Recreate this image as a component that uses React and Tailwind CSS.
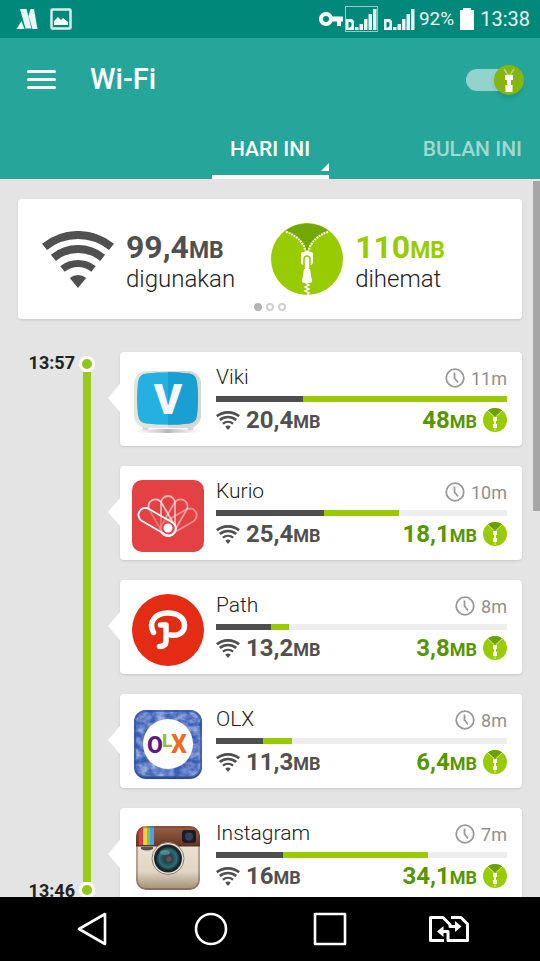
import { useState } from "react";

const APPS = [
  { name: "Viki", ago: "11m", used: "20,4", saved: "48", usedPct: 30, savedPct: 70, Icon: VikiIcon },
  { name: "Kurio", ago: "10m", used: "25,4", saved: "18,1", usedPct: 37, savedPct: 26, Icon: KurioIcon },
  { name: "Path", ago: "8m", used: "13,2", saved: "3,8", usedPct: 19, savedPct: 6, Icon: PathIcon },
  { name: "OLX", ago: "8m", used: "11,3", saved: "6,4", usedPct: 16, savedPct: 10, Icon: OlxIcon },
  { name: "Instagram", ago: "7m", used: "16", saved: "34,1", usedPct: 23, savedPct: 50, Icon: InstagramIcon },
];

function WifiIcon({ className }) {
  return (
    <svg viewBox="0 0 72 57" className={className} fill="none" stroke="#505050" aria-hidden="true">
      <path d="M2.5 15.9A53 53 0 0 1 69.5 15.9" strokeWidth="8" />
      <path d="M11.4 26.8A39 39 0 0 1 60.6 26.8" strokeWidth="8" />
      <path d="M20.5 38A24.5 24.5 0 0 1 51.5 38" strokeWidth="7" />
      <path d="M36 57L27.8 46.9A13 13 0 0 1 44.2 46.9Z" fill="#505050" stroke="none" />
    </svg>
  );
}

function ZipIcon({ className }) {
  return (
    <svg viewBox="0 0 72 72" className={className} aria-hidden="true">
      <circle cx="36" cy="36" r="36" fill="#99cc00" />
      <path d="M15 7.2A36 36 0 0 1 57 7.2C48 12 40 18 36 28C32 18 24 12 15 7.2Z" fill="#74a800" />
      <path d="M15 9C25 12 33 19 35 30M57 9C47 12 39 19 37 30" fill="none" stroke="#fff" strokeWidth="2.2" strokeDasharray="1.8 1" />
      <path d="M35 60L38 62L34 64L38 66L34 68L38 70L36 72" fill="none" stroke="#fff" strokeWidth="1.4" />
      <path d="M32 29h8a2 2 0 0 1 2 2v8a3 3 0 0 1-2 3h-8a3 3 0 0 1-2-3v-8a2 2 0 0 1 2-2Z" fill="#fff" />
      <rect x="33" y="33" width="6" height="15" rx="3" fill="#fff" stroke="#99cc00" strokeWidth="1.6" />
      <path d="M33 46h6l2 12a2 2 0 0 1-2 2h-6a2 2 0 0 1-2-2Z" fill="#fff" />
    </svg>
  );
}

// Simplified zipper for the badges at the end of each row
function SmallZipIcon({ className }) {
  return (
    <svg viewBox="0 0 24 24" className={className} aria-hidden="true">
      <circle cx="12" cy="12" r="12" fill="#99cc00" />
      <path d="M5 2.3A12 12 0 0 1 19 2.3L12 9Z" fill="#6da000" />
      <path d="M5 3L11.5 9M19 3L12.5 9" stroke="#cfe88a" strokeWidth="1" />
      <path d="M10 9h4v4h-1v3h1v4h-4v-4h1v-3h-1Z" fill="#fff" />
      <path d="M12 20v3" stroke="#dff0a8" strokeWidth="1" />
    </svg>
  );
}

function ClockIcon() {
  return (
    <svg viewBox="0 0 20 20" className="size-5" fill="none" stroke="#9a9a9a" strokeWidth="1.8" aria-hidden="true">
      <circle cx="10" cy="10" r="8.8" />
      <path d="M9.5 4.5V10L13 14.5" />
    </svg>
  );
}

function VikiIcon() {
  return (
    <svg viewBox="0 0 72 72" className="size-[72px]" aria-hidden="true">
      <defs>
        <linearGradient id="viki-shadow" x1="0" x2="1">
          <stop offset="0" stopColor="#bbb" stopOpacity="0" />
          <stop offset="0.5" stopColor="#999" stopOpacity="0.7" />
          <stop offset="1" stopColor="#bbb" stopOpacity="0" />
        </linearGradient>
      </defs>
      <ellipse cx="36" cy="65" rx="35" ry="2" fill="url(#viki-shadow)" />
      <path d="M10 59h8l-2 5h-5ZM54 59h8l-1 5h-5Z" fill="#d8d6d3" />
      <rect x="2" y="5" width="67" height="57" rx="13" fill="#e6e3df" />
      <path d="M36 5h20a13 13 0 0 1 13 13v31a13 13 0 0 1-13 13H36Z" fill="#d9d5d1" />
      <path d="M14 7.5Q36 5 57 7.5Q64 8 65 16Q67 33 65 49Q64 57 57 57.5Q36 60 14 57.5Q7 57 6 49Q4 33 6 16Q7 8 14 7.5Z" fill="#25b0e2" />
      <path d="M36 6.2Q47 6.2 57 7.5Q64 8 65 16Q67 33 65 49Q64 57 57 57.5Q47 58.8 36 58.8Z" fill="#1a9fd2" />
      <text x="36" y="48" textAnchor="middle" fontFamily="Roboto, sans-serif" fontWeight="900" fontSize="43" fill="#f7f7f7">V</text>
    </svg>
  );
}

function KurioIcon() {
  const petals = [
    [60, 0.4],
    [30, 0.5],
    [0, 0.6],
    [-30, 0.7],
  ];
  return (
    <svg viewBox="0 0 72 72" className="size-[72px]" fill="none" stroke="#fff" strokeWidth="1.8" aria-hidden="true">
      <rect width="72" height="72" rx="10" fill="#e44145" stroke="none" />
      {petals.map(([angle, opacity]) => (
        <rect key={angle} x="29" y="16" width="14" height="40" rx="7" opacity={opacity} transform={`rotate(${angle} 36 48)`} />
      ))}
      <rect x="29" y="15" width="14" height="41" rx="7" fill="#e44145" fillOpacity="0.6" transform="rotate(-60 36 48)" />
      <circle cx="36" cy="48" r="4.5" fill="#fff" stroke="none" />
    </svg>
  );
}

function PathIcon() {
  return (
    <svg viewBox="0 0 72 72" className="size-[72px]" aria-hidden="true">
      <circle cx="36" cy="36" r="36" fill="#e42c14" />
      <g fill="none" stroke="#fff" strokeWidth="5.5" strokeLinecap="round" strokeLinejoin="round">
        <path d="M21.5 38.5C16 28 23 19 36 19C46 19 52.5 24 52.5 31.5C52.5 38.500 46 42.500 38.5 41" />
        <path d="M28.500 31H34V47C34 51 31.500 52.500 27.500 52.500" />
      </g>
    </svg>
  );
}

function OlxIcon() {
  return (
    <svg viewBox="0 0 72 72" className="size-[72px]" aria-hidden="true">
      <defs>
        <filter id="denim" x="0" y="0" width="100%" height="100%">
          <feTurbulence type="fractalNoise" baseFrequency="0.12 0.16" numOctaves="4" seed="4" />
          <feColorMatrix values="0 0 0 0 0.55  0 0 0 0 0.66  0 0 0 0 0.92  1.4 0 0 0 -0.4" />
          <feComposite in2="SourceGraphic" operator="in" />
        </filter>
      </defs>
      <rect x="2" y="3" width="68" height="68" rx="12" fill="#2c4a94" />
      <rect x="2" y="2" width="68" height="67" rx="12" fill="#3b5db5" />
      <rect x="2" y="2" width="68" height="67" rx="12" fill="#fff" filter="url(#denim)" />
      <rect x="3" y="3" width="66" height="66" rx="11" fill="none" stroke="#3352a3" strokeWidth="2" opacity="0.7" />
      <circle cx="36" cy="36" r="25" fill="#fff" />
      <g fontFamily="Roboto, sans-serif" fontWeight="800">
        <text x="15" y="45" fontSize="23" fill="#5c1a83">O</text>
        <text x="30" y="39" fontSize="19" fill="#8fc03a">L</text>
        <text x="39" y="45" fontSize="25" fill="#f26a21">X</text>
      </g>
    </svg>
  );
}

function InstagramIcon() {
  return (
    <svg viewBox="0 0 72 72" className="size-[72px]" aria-hidden="true">
      <defs>
        <clipPath id="insta-body">
          <rect x="4" y="4" width="64" height="64" rx="10" />
        </clipPath>
        <linearGradient id="insta-cream" x2="0" y2="1">
          <stop offset="0" stopColor="#efe8dc" />
          <stop offset="0.7" stopColor="#e2d7c6" />
          <stop offset="1" stopColor="#a28c74" />
        </linearGradient>
        <linearGradient id="insta-leather" x2="0" y2="1">
          <stop offset="0" stopColor="#9a6348" />
          <stop offset="1" stopColor="#673521" />
        </linearGradient>
        <radialGradient id="insta-lens">
          <stop offset="0" stopColor="#5b3c4c" />
          <stop offset="0.35" stopColor="#21454f" />
          <stop offset="0.7" stopColor="#2d6f75" />
          <stop offset="1" stopColor="#10191f" />
        </radialGradient>
      </defs>
      <g clipPath="url(#insta-body)">
        <rect x="4" y="4" width="64" height="64" fill="url(#insta-cream)" />
        <rect x="4" y="4" width="64" height="20" fill="url(#insta-leather)" />
        <rect x="7" y="4" width="4" height="20" fill="#df3b44" />
        <rect x="11" y="4" width="4" height="20" fill="#f3ce3d" />
        <rect x="15" y="4" width="3" height="20" fill="#7cc26a" />
        <rect x="18" y="4" width="4" height="20" fill="#4aa3de" />
        <rect x="4" y="23" width="64" height="1.5" fill="#55311f" />
        <rect x="5" y="5" width="62" height="62" rx="9" fill="none" stroke="#5a3a22" strokeWidth="2" opacity="0.35" />
      </g>
      <path d="M9 25h12v2q-6 3-12 0Z" fill="#5b5048" />
      <rect x="50" y="8" width="14" height="13" rx="3" fill="#1d1a22" />
      <circle cx="57" cy="14.5" r="4" fill="#35405d" />
      <circle cx="36" cy="36.5" r="16" fill="#e9e3da" stroke="#8b7e70" />
      <circle cx="36" cy="36.5" r="14" fill="#22282c" />
      <circle cx="36" cy="36.5" r="12.5" fill="url(#insta-lens)" />
      <ellipse cx="33" cy="30.5" rx="5" ry="2.5" fill="#7fb5b5" opacity="0.5" />
      <circle cx="37" cy="37" r="2.5" fill="#8d4a52" opacity="0.7" />
    </svg>
  );
}

function SignalIcon({ boxed }) {
  return (
    <svg viewBox="0 0 34 28" className="h-7 w-[34px]" fill="#e8f7f5" aria-hidden="true">
      {boxed && <rect x="0.5" y="1.5" width="32" height="25" fill="none" stroke="#8fcdc6" />}
      <path fillRule="evenodd" d="M1 14h6l2 2v9H1ZM3.5 17v5.5h1.5l1.5-1.5v-3l-1-1Z" />
      <path d="M10 22h3.5v3H10ZM14.5 19h3.500v6h-3.500ZM19 14h3.500v11H19ZM23.500 9h3.500v16h-3.500ZM28 4h3.500v21H28Z" />
    </svg>
  );
}

function StatusBar() {
  return (
    <div className="flex h-[38px] shrink-0 items-center justify-between bg-[#00897a] pr-2.5 pl-4 text-[#e8f7f5]">
      <div className="flex items-center gap-3">
        <svg viewBox="0 0 22 22" className="size-[22px]" fill="#e8f7f5" aria-hidden="true">
          <path d="M4 1h6.500l5 19.500H9.500ZM0.500 21l5-8 3 8ZM14.500 1h3.500l3.500 20h-5L12.500 8Z" />
        </svg>
        <svg viewBox="0 0 22 22" className="size-[22px]" aria-hidden="true">
          <rect x="1.5" y="1.5" width="19" height="19" rx="1" fill="none" stroke="#d5f0ec" strokeWidth="2.5" />
          <path d="M4 17v-4l4-4 3 3 2-2 5 4v3Z" fill="#fff" />
        </svg>
      </div>
      <div className="flex items-center">
        <svg viewBox="0 0 24 14" className="h-3.5 w-6" aria-hidden="true">
          <path fill="#fff" fillRule="evenodd" d="M7 0a7 7 0 0 1 6.5 4.5H24v5h-2V14h-4V9.500h-4.500A7 7 0 1 1 7 0ZM7 4a3 3 0 1 0 0 6 3 3 0 0 0 0-6Z" />
        </svg>
        <span className="ml-0.5 flex gap-1">
          <SignalIcon boxed />
          <SignalIcon />
        </span>
        <span className="ml-0.5 text-[19px]">92%</span>
        <svg viewBox="0 0 14 22" className="mx-1.5 h-[22px] w-3.5" fill="#fff" aria-hidden="true">
          <path d="M3 0h8v2h3v20H0V2h3Z" />
        </svg>
        <span className="text-[20px]">13:38</span>
      </div>
    </div>
  );
}

function Header({ enabled, onToggle }) {
  return (
    <header className="shrink-0 bg-[#26a69a] text-white">
      <div className="flex h-[83px] items-center pr-4 pl-[27px]">
        <button aria-label="Menu" className="flex w-[29px] flex-col gap-[5px]">
          <span className="h-[3px] rounded-full bg-white" />
          <span className="h-[3px] rounded-full bg-white" />
          <span className="h-[3px] rounded-full bg-white" />
        </button>
        <h1 className="ml-[34px] text-[29px] font-medium">Wi-Fi</h1>
        <label className="relative ml-auto flex h-[30px] w-[58px] cursor-pointer items-center">
          <input type="checkbox" aria-label="Wi-Fi" checked={enabled} onChange={onToggle} className="peer sr-only" />
          <span className="h-[22px] w-11 rounded-full bg-[#93d3cd]" />
          <span className="absolute left-0 size-[30px] rounded-full bg-[#86b50c] shadow-md peer-checked:left-7">
            <svg viewBox="0 0 30 30" aria-hidden="true">
              <path d="M10 4l4 6M20 4l-4 6" stroke="#b9d66e" strokeWidth="1.5" />
              <path d="M11 10h8v5h-2v5h1.500v7h-7v-7H13v-5h-2Z" fill="#fff" />
            </svg>
          </span>
        </label>
      </div>
      <nav className="grid h-[58px] grid-cols-[1fr_auto_1fr] text-[21px] font-medium">
        <button className="relative col-start-2 w-[117px] border-b-4 border-white pt-1">
          HARI INI
          <svg viewBox="0 0 8 8" className="absolute right-0 bottom-1 size-2" fill="#fff" aria-hidden="true">
            <path d="M8 0v8H0Z" />
          </svg>
        </button>
        <button className="justify-self-end pr-[18px] text-[#a0d8d2]">BULAN INI</button>
      </nav>
    </header>
  );
}

function Summary() {
  return (
    <section className="rounded bg-white pt-6 pb-2 shadow-sm">
      <div className="flex h-[72px] items-center gap-9 pl-6">
        <div className="flex items-center gap-3">
          <WifiIcon className="h-[57px] w-[72px]" />
          <div className="pt-1 text-[#505050]">
            <p className="text-[32px] leading-8 font-bold">
              99,4<span className="text-[23px]">MB</span>
            </p>
            <p className="text-[24px] leading-6 font-light text-[#222]">digunakan</p>
          </div>
        </div>
        <div className="flex items-center gap-3">
          <ZipIcon className="size-[72px]" />
          <div className="pt-1 text-[#99cc00]">
            <p className="text-[32px] leading-8 font-bold">
              110<span className="text-[23px]">MB</span>
            </p>
            <p className="text-[24px] leading-6 font-light text-[#222]">dihemat</p>
          </div>
        </div>
      </div>
      <div className="mt-2 flex justify-center gap-1">
        <span className="size-2 rounded-full bg-[#b5b5b5]" />
        <span className="size-2 rounded-full border-2 border-[#cfcfcf]" />
        <span className="size-2 rounded-full border-2 border-[#cfcfcf]" />
      </div>
    </section>
  );
}

function AppCard({ app }) {
  const { Icon } = app;
  return (
    <li className="relative flex gap-3 rounded bg-white pt-3.5 pr-[15px] pb-2 pl-3 shadow-sm">
      <svg viewBox="0 0 12 28" className="absolute top-8 -left-3 h-7 w-3" fill="#fff" aria-hidden="true">
        <path d="M12 0v28L0 14Z" />
      </svg>
      <Icon />
      <div className="min-w-0 flex-1">
        <div className="flex h-6 items-center justify-between">
          <h2 className="text-[21px] font-light text-[#222]">{app.name}</h2>
          <span className="flex items-center gap-1.5 text-[18px] text-[#8f8f8f]">
            <ClockIcon />
            {app.ago}
          </span>
        </div>
        <div className="mt-1.5 mb-1 flex h-1.5 bg-[#eeeeee]">
          <div className="bg-[#4f4f4f]" style={{ width: `${app.usedPct}%` }} />
          <div className="bg-[#99cc00]" style={{ width: `${app.savedPct}%` }} />
        </div>
        <div className="flex h-7 items-center justify-between text-[24px] font-bold">
          <span className="flex items-center gap-1.5 text-[#505050]">
            <WifiIcon className="h-[19px] w-6" />
            <span>
              {app.used}
              <span className="text-[18px]">MB</span>
            </span>
          </span>
          <span className="flex items-center gap-1.5 text-[#569600]">
            <span>
              {app.saved}
              <span className="text-[18px]">MB</span>
            </span>
            <SmallZipIcon className="size-6" />
          </span>
        </div>
      </div>
    </li>
  );
}

function Timeline() {
  return (
    <div className="mt-[33px] flex">
      <div className="flex w-[57px] shrink-0 flex-col justify-between text-right text-[18px] leading-[22px] font-bold text-[#222]">
        <time>13:57</time>
        <time>13:46</time>
      </div>
      <div className="flex w-[45px] shrink-0 flex-col items-center py-1 pr-[21px]">
        <span className="size-4 shrink-0 rounded-full border-[3px] border-white bg-[#8fc816]" />
        <span className="w-2 flex-1 bg-[#99cc1a]" />
        <span className="size-4 shrink-0 rounded-full border-[3px] border-white bg-[#8fc816]" />
      </div>
      <ul className="flex min-w-0 flex-1 flex-col gap-5">
        {APPS.map(app => (
          <AppCard key={app.name} app={app} />
        ))}
      </ul>
    </div>
  );
}

function NavBar() {
  return (
    <nav className="grid h-16 shrink-0 grid-cols-4 bg-black px-8">
      <button aria-label="Back" className="flex items-center justify-center">
        <svg viewBox="0 0 32 34" className="h-[34px] w-8" fill="none" stroke="#fff" strokeWidth="2.6" strokeLinejoin="round">
          <path d="M29 2v30L3 17Z" />
        </svg>
      </button>
      <button aria-label="Home" className="flex items-center justify-center">
        <svg viewBox="0 0 34 34" className="size-[34px]" fill="none" stroke="#fff" strokeWidth="2.6">
          <circle cx="17" cy="17" r="15" />
        </svg>
      </button>
      <button aria-label="Recent apps" className="flex items-center justify-center">
        <svg viewBox="0 0 34 34" className="size-[34px]" fill="none" stroke="#fff" strokeWidth="2.6" strokeLinejoin="round">
          <rect x="2" y="2" width="30" height="30" />
        </svg>
      </button>
      <button aria-label="Switch SIM" className="flex items-center justify-center">
        <svg viewBox="0 0 40 26" className="h-[26px] w-10" fill="none" stroke="#fff" strokeWidth="3" strokeLinejoin="round">
          <path d="M15 24.500H1.500V1.500H14L21 8.500V10.500H28" />
          <path d="M22 1.500H32L38.500 8V24.500H19V15.500H12" />
          <path d="M26 5L32.500 10.500L26 16ZM14.500 10L8 15.500L14.500 21Z" fill="#fff" stroke="none" />
        </svg>
      </button>
    </nav>
  );
}

export default function App() {
  const [enabled, setEnabled] = useState(true);

  return (
    <div className="flex h-screen flex-col overflow-hidden bg-[#e4e4e4] font-[Roboto,sans-serif]">
      <StatusBar />
      <Header enabled={enabled} onToggle={() => setEnabled(!enabled)} />
      <main className="relative min-h-0 flex-1 overflow-hidden px-[18px] pt-5">
        <Summary />
        <Timeline />
        {/* scroll thumb */}
        <div className="absolute top-0.5 right-0 h-[46%] w-[7px] bg-[#a6a6a6]" />
      </main>
      <NavBar />
    </div>
  );
}
